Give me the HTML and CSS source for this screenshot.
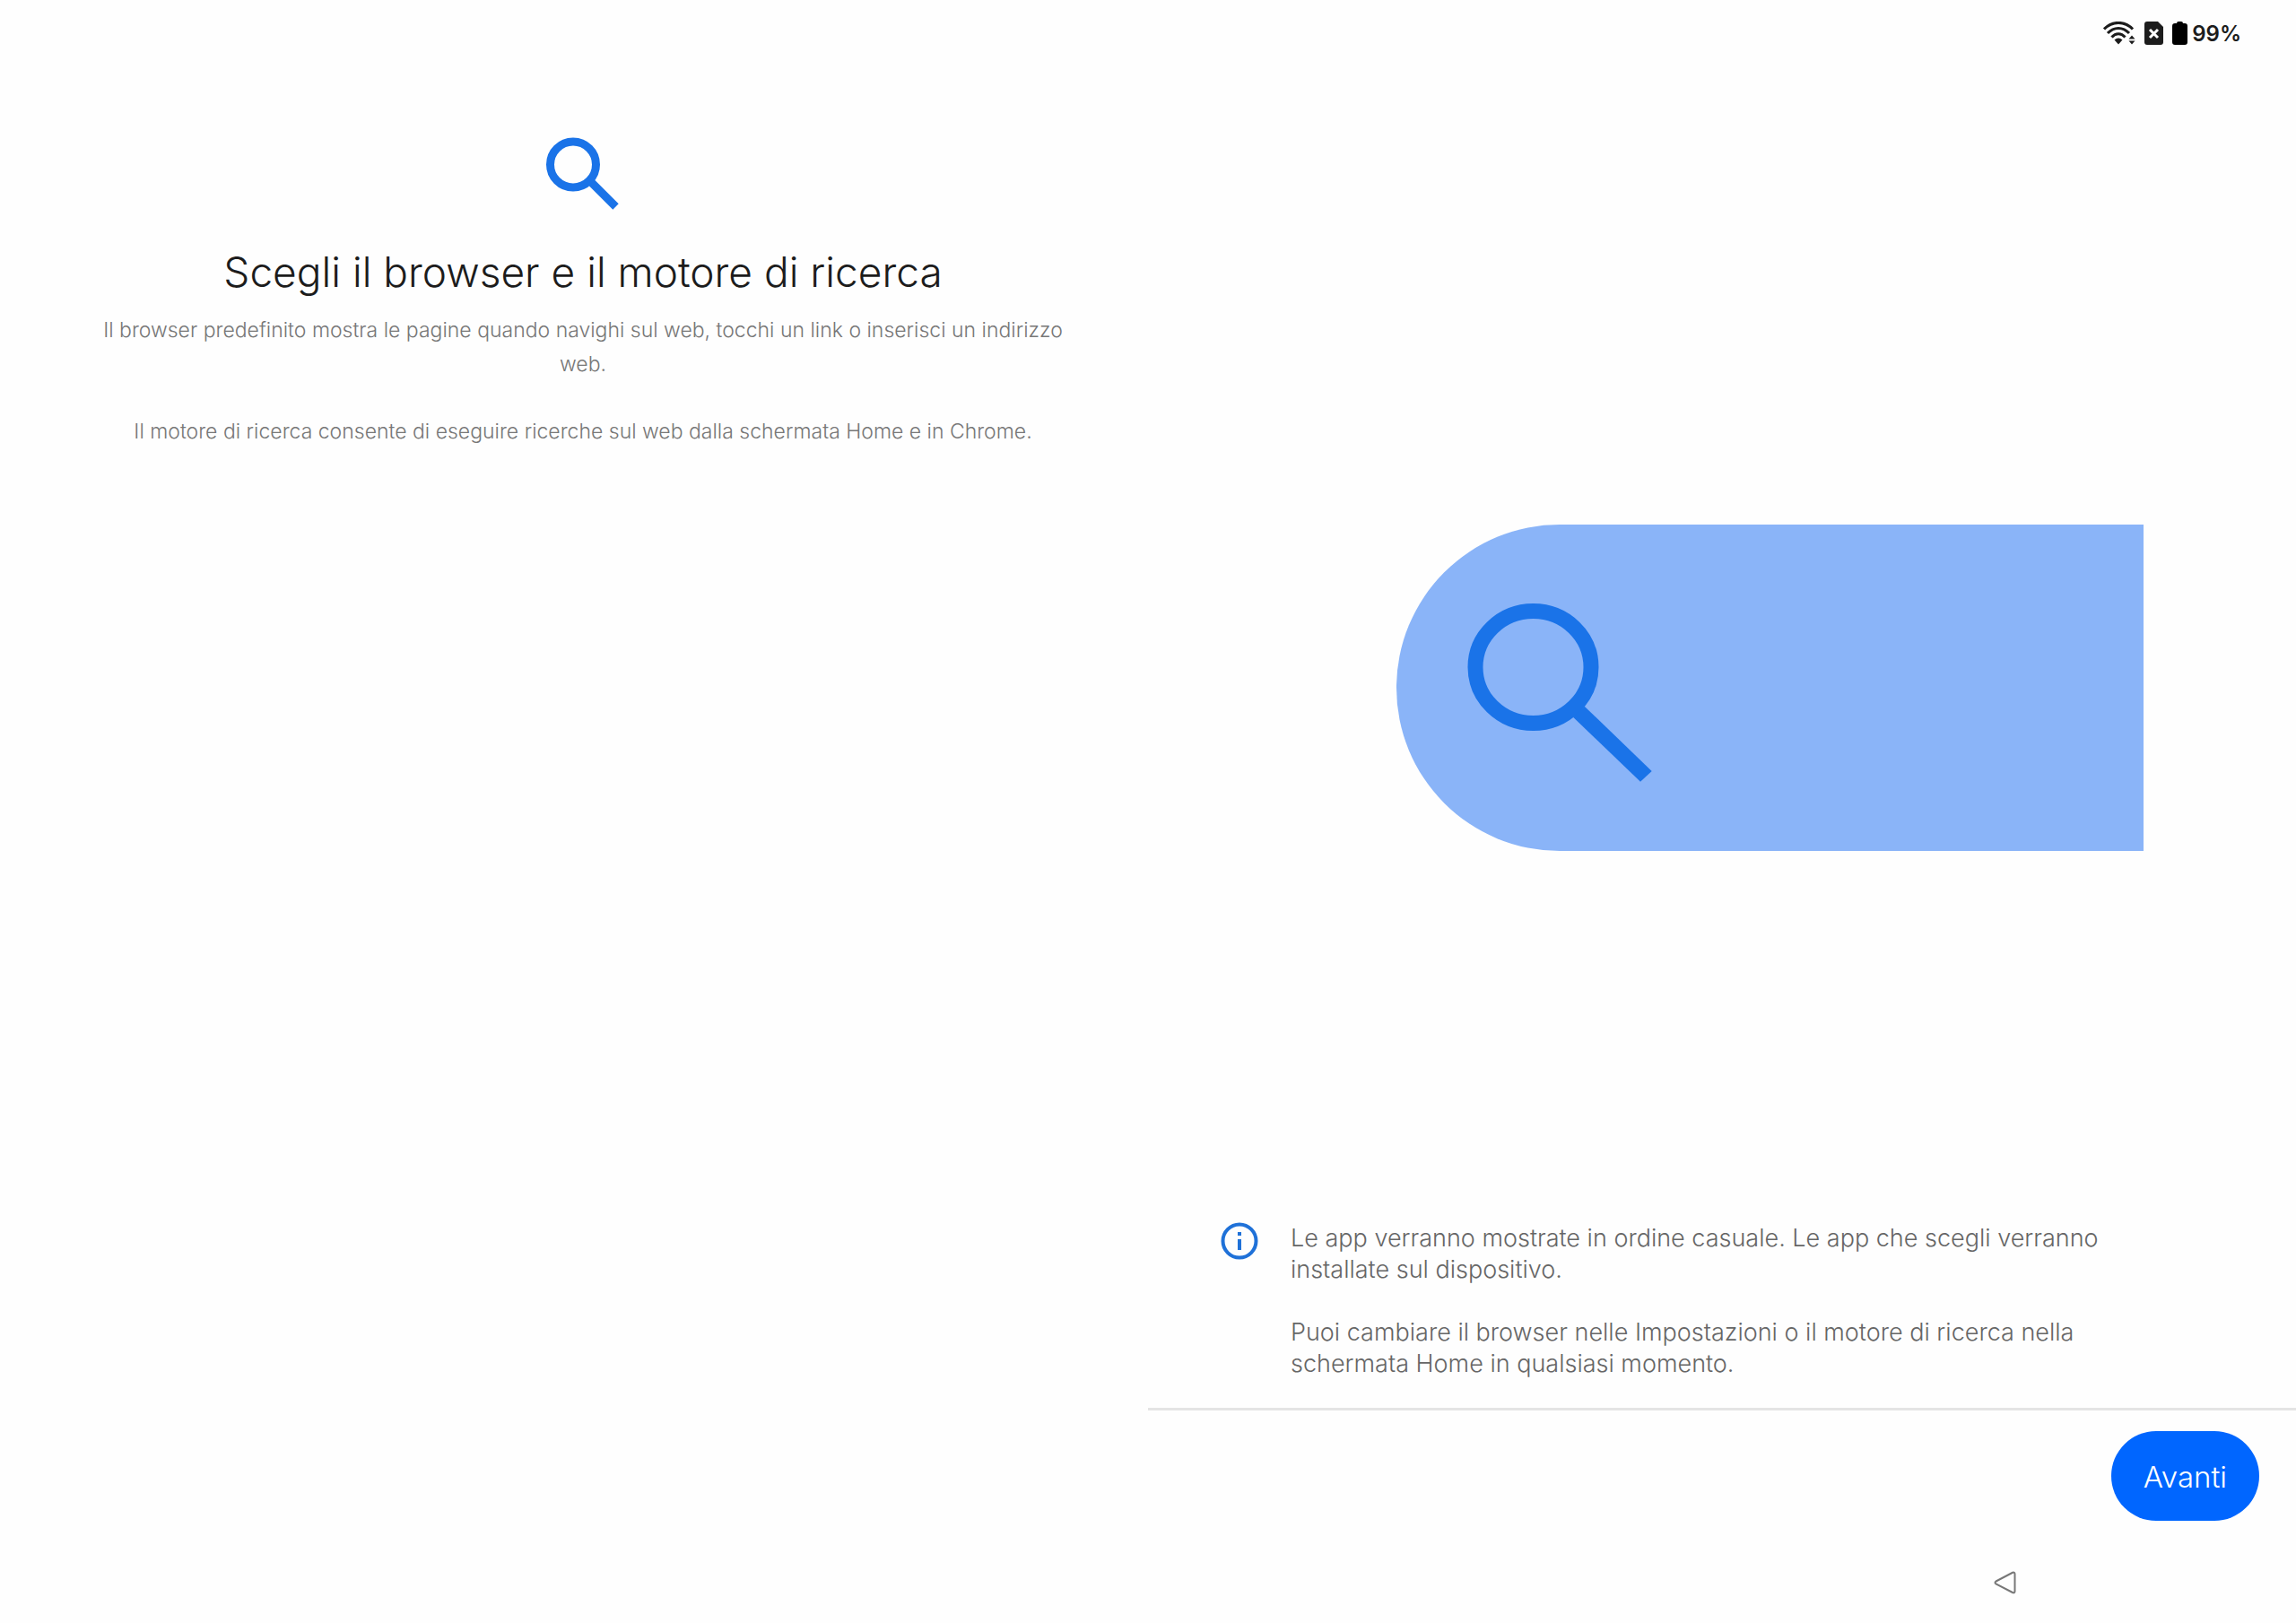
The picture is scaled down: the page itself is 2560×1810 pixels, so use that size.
FILE: index.html
```html
<!DOCTYPE html>
<html lang="it">
  <head>
    <meta charset="utf-8" />
    <meta name="viewport" content="width=device-width, initial-scale=1" />
    <title>Scegli il browser e il motore di ricerca</title>
    <link rel="stylesheet" href="styles.css">
  </head>

  <body>
    <!-- Status bar -->
    <header class="status-bar">
      <svg class="wifi" viewBox="0 0 36 26" width="36" height="26" aria-hidden="true">
        <g fill="none" stroke="#1c1c1c" stroke-width="3">
          <path d="M1 8.500C10 -1 24 -1 33 8.500" />
          <path d="M5 13C12 5.500 22 5.500 29 13" />
          <path d="M9.500 17.500C14 12.500 20 12.500 24.500 17.500" />
        </g>
        <path d="M12.500 20.500Q17 16.500 21.500 20.500L17 25.500Z" fill="#1c1c1c" />
        <path d="M28.500 19.500L32 15.500L35.500 19.500ZM28.500 21.500L32 25.500L35.500 21.500Z" fill="#1c1c1c" />
      </svg>
      <svg class="sim" viewBox="0 0 21 26" width="21" height="26" aria-hidden="true">
        <path d="M3 0H15L21 6V23Q21 26 18 26H3Q0 26 0 23V3Q0 0 3 0Z" fill="#1c1c1c" />
        <path d="M6 9L15 18M15 9L6 18" stroke="#fefefe" stroke-width="3" />
      </svg>
      <svg class="battery" viewBox="0 0 17 26" width="17" height="26" aria-hidden="true">
        <path d="M5 2Q5 0 7 0H10Q12 0 12 2H14Q17 2 17 5V23Q17 26 14 26H3Q0 26 0 23V5Q0 2 3 2Z" fill="#000000" />
      </svg>
      <span class="battery-level">99%</span>
    </header>

    <main class="panes">
      <section class="intro">
        <svg class="intro-icon" viewBox="0 0 82 82" width="82" height="82" aria-hidden="true">
          <circle cx="30" cy="30.500" r="25.500" fill="none" stroke="#1a73e8" stroke-width="9" />
          <path d="M48 48L77.500 77.500" stroke="#1a73e8" stroke-width="9" />
        </svg>
        <h1>Scegli il browser e il motore di ricerca</h1>
        <p>Il browser predefinito mostra le pagine quando navighi sul web, tocchi un link o inserisci un indirizzo web.</p>
        <p>Il motore di ricerca consente di eseguire ricerche sul web dalla schermata Home e in Chrome.</p>
      </section>

      <section class="details">
        <div class="stage">
          <svg class="illustration" viewBox="0 0 833 364" aria-hidden="true">
            <path d="M833 0H182A182 182 0 0 0 182 364H833Z" fill="#8ab4f8" />
            <ellipse cx="152.500" cy="159" rx="64.500" ry="62.500" fill="none" stroke="#1a73e8" stroke-width="17" />
            <path d="M209.700 202.700L284.700 275L272 286.700L197 214.700Z" fill="#1a73e8" />
          </svg>
        </div>
        <div class="info">
          <svg class="info-icon" viewBox="0 0 42 42" width="42" height="42" aria-hidden="true">
            <circle cx="21" cy="21" r="18.500" fill="none" stroke="#1f71d8" stroke-width="4" />
            <path d="M19 11H23V15H19ZM19 19H23V31H19Z" fill="#1f71d8" />
          </svg>
          <div class="info-text">
            <p>Le app verranno mostrate in ordine casuale. Le app che scegli verranno installate sul dispositivo.</p>
            <p>Puoi cambiare il browser nelle Impostazioni o il motore di ricerca nella schermata Home in qualsiasi momento.</p>
          </div>
        </div>
        <div class="actions">
          <button type="button" class="btn-next">Avanti</button>
        </div>
      </section>
    </main>

    <!-- System navigation -->
    <nav class="nav-bar">
      <button type="button" class="btn-back" aria-label="Indietro">
        <svg viewBox="0 0 26 26" width="26" height="26" aria-hidden="true">
          <path d="M2.500 11.500L21 1.800Q23.500 1 23.500 3.500V22.500Q23.500 25 21 24L2.500 14.500Q0.500 13 2.500 11.500Z" fill="none" stroke="#777777" stroke-width="2" />
        </svg>
      </button>
    </nav>
  </body>
</html>
```

FILE: styles.css
```css
* {
  box-sizing: border-box;
}

body {
  display: flex;
  flex-direction: column;
  min-height: 100vh;
  margin: 0;
  background-color: #fefefe;
  font-family: Inter, Roboto, sans-serif;
  font-weight: 300;
}

h1,
p {
  margin: 0;
}

svg {
  display: block;
}

/* Status bar */
.status-bar {
  display: flex;
  justify-content: flex-end;
  align-items: center;
  gap: 10px;
  height: 74px;
  padding-right: 61px;
}

.battery-level {
  margin-left: -5px;
  font-size: 24px;
  font-weight: 600;
  color: #1c1c1c;
}

/* Two halves of the screen */
.panes {
  display: grid;
  grid-template-columns: 1fr 1fr;
  flex: 1;
}

.intro {
  display: flex;
  flex-direction: column;
  align-items: center;
  padding: 79px 80px 0 100px;
  text-align: center;
}

.intro h1 {
  margin: 38px 0 16px;
  font-size: 46px;
  font-weight: 300;
  line-height: 60px;
  color: #1c1c1c;
}

.intro p {
  margin-bottom: 37px;
  font-size: 23px;
  line-height: 38px;
  color: #777777;
}

.details {
  display: flex;
  flex-direction: column;
}

.stage {
  display: flex;
  flex: 1;
  align-items: center;
  padding: 96px 170px 0 277px;
}

.illustration {
  width: 100%;
}

.info {
  display: flex;
  gap: 36px;
  padding: 0 170px 32px 81px;
}

.info-icon {
  flex: none;
}

.info-text {
  display: grid;
  gap: 35px;
  font-size: 27px;
  line-height: 35px;
  color: #666666;
}

.actions {
  display: flex;
  justify-content: flex-end;
  padding: 23px 41px 24px;
  border-top: 3px solid #e4e4e4;
}

.btn-next {
  height: 100px;
  padding: 2px 36px 0;
  border: none;
  border-radius: 50px;
  background-color: #0066ff;
  color: #ffffff;
  font: inherit;
  font-size: 33px;
  cursor: pointer;
}

/* System navigation */
.nav-bar {
  display: flex;
  justify-content: flex-end;
  align-items: center;
  height: 90px;
  padding-right: 311px;
}

.btn-back {
  padding: 0;
  border: none;
  background: none;
  cursor: pointer;
}
```
